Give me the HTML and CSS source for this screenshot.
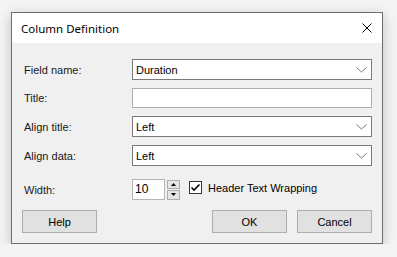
FILE: index.html
```html
<!DOCTYPE html>
<html>
<head>
<meta charset="utf-8">
<link rel="stylesheet" href="styles.css">
</head>
<body>
<div class="page">
  <div class="dialog">
    <div class="titlebar">
      <span class="title">Column Definition</span>
      <svg class="close" width="10" height="10" viewBox="0 0 10 10"><path d="M0.5 0.5 L9.5 9.5 M9.5 0.5 L0.5 9.5" stroke="#000" stroke-width="1" fill="none"/></svg>
    </div>
    <div class="content">
      <div class="row r1">
        <label class="lbl">Field name:</label>
        <div class="combo"><span>Duration</span>
          <svg class="chev" width="11" height="6" viewBox="0 0 11 6"><path d="M0.5 0.5 L5.5 5 L10.5 0.5" stroke="#777" stroke-width="1" fill="none"/></svg>
        </div>
      </div>
      <div class="row r2">
        <label class="lbl">Title:</label>
        <div class="textbox"></div>
      </div>
      <div class="row r3">
        <label class="lbl">Align title:</label>
        <div class="combo"><span>Left</span>
          <svg class="chev" width="11" height="6" viewBox="0 0 11 6"><path d="M0.5 0.5 L5.5 5 L10.5 0.5" stroke="#777" stroke-width="1" fill="none"/></svg>
        </div>
      </div>
      <div class="row r4">
        <label class="lbl">Align data:</label>
        <div class="combo"><span>Left</span>
          <svg class="chev" width="11" height="6" viewBox="0 0 11 6"><path d="M0.5 0.5 L5.5 5 L10.5 0.5" stroke="#777" stroke-width="1" fill="none"/></svg>
        </div>
      </div>
      <div class="row r5">
        <label class="lbl">Width:</label>
        <div class="num">10</div>
        <div class="spin">
          <div class="sbtn"><svg width="5" height="3" viewBox="0 0 5 3"><path d="M2.5 0 L5 3 L0 3 Z" fill="#000"/></svg></div>
          <div class="sbtn"><svg width="5" height="3" viewBox="0 0 5 3"><path d="M0 0 L5 0 L2.5 3 Z" fill="#000"/></svg></div>
        </div>
        <div class="check"><svg width="11" height="11" viewBox="0 0 11 11"><path d="M1.5 5.5 L4 8 L9.5 2.5" stroke="#000" stroke-width="1.6" fill="none"/></svg></div>
        <span class="checklbl">Header Text Wrapping</span>
      </div>
      <div class="buttons">
        <div class="btn">Help</div>
        <div class="spacer"></div>
        <div class="btn">OK</div>
        <div class="btn">Cancel</div>
      </div>
    </div>
  </div>
</div>
</body>
</html>
```

FILE: styles.css
```css
html, body {
  margin: 0;
  padding: 0;
  background: #f4f4f4;
}
.page {
  padding: 12px 0 0 11px;
}
.dialog {
  width: 372px;
  height: 232px;
  box-sizing: border-box;
  border: 1px solid #6e6e6e;
  background: #f0f0f0;
  box-shadow: 0 3px 12px rgba(0,0,0,0.22);
  display: flex;
  flex-direction: column;
  font-family: "Liberation Sans", Arial, sans-serif;
  font-size: 11px;
  color: #000;
}
.titlebar {
  height: 30px;
  background: #fff;
  display: flex;
  align-items: center;
  padding: 0 10px 0 9px;
}
.title {
  font-family: "Noto Sans", "Open Sans", sans-serif;
  font-size: 11.5px;
  flex: 1;
  padding-top: 1px;
}
.content {
  padding: 16px 10px 0 10px;
  display: flex;
  flex-direction: column;
}
.row {
  display: flex;
  align-items: center;
  height: 21px;
}
.r2 { margin-top: 8px; height: 20px; }
.r3 { margin-top: 8px; }
.r4 { margin-top: 8px; }
.r5 { margin-top: 13px; }
.lbl {
  width: 110px;
  box-sizing: border-box;
  padding-left: 2px;
  color: #1a1a1a;
}
.combo {
  flex: 1;
  height: 21px;
  box-sizing: border-box;
  border: 1px solid #7a7a7a;
  background: #fff;
  display: flex;
  align-items: center;
  padding: 0 0 0 3px;
}
.combo span { flex: 1; }
.chev {
  margin-right: 4px;
}
.textbox {
  flex: 1;
  height: 20px;
  box-sizing: border-box;
  border: 1px solid #adadad;
  background: #fff;
}
.num {
  width: 33px;
  height: 21px;
  box-sizing: border-box;
  border: 1px solid #b4b4b4;
  background: #fff;
  padding: 3px 0 0 2px;
  line-height: 13px;
  font-size: 12px;
  color: #000;
}
.spin {
  margin-left: 2px;
  width: 13px;
  height: 20px;
  display: flex;
  flex-direction: column;
  gap: 1px;
}
.sbtn {
  flex: 1;
  box-sizing: border-box;
  border: 1px solid #adadad;
  background: #e5e5e5;
  display: flex;
  align-items: center;
  justify-content: center;
}
.check {
  margin-left: 9px;
  width: 13px;
  height: 13px;
  box-sizing: border-box;
  border: 1px solid #333;
  background: #fff;
  display: flex;
  align-items: center;
  justify-content: center;
  margin-top: -4px;
}
.checklbl {
  margin-left: 6px;
  margin-top: -4px;
}
.buttons {
  margin-top: 10px;
  display: flex;
}
.spacer { flex: 1; }
.btn {
  width: 75px;
  height: 23px;
  box-sizing: border-box;
  border: 1px solid #adadad;
  background: #e1e1e1;
  display: flex;
  align-items: center;
  justify-content: center;
  margin-left: 10px;
}
.btn:first-child { margin-left: 0; }
```
